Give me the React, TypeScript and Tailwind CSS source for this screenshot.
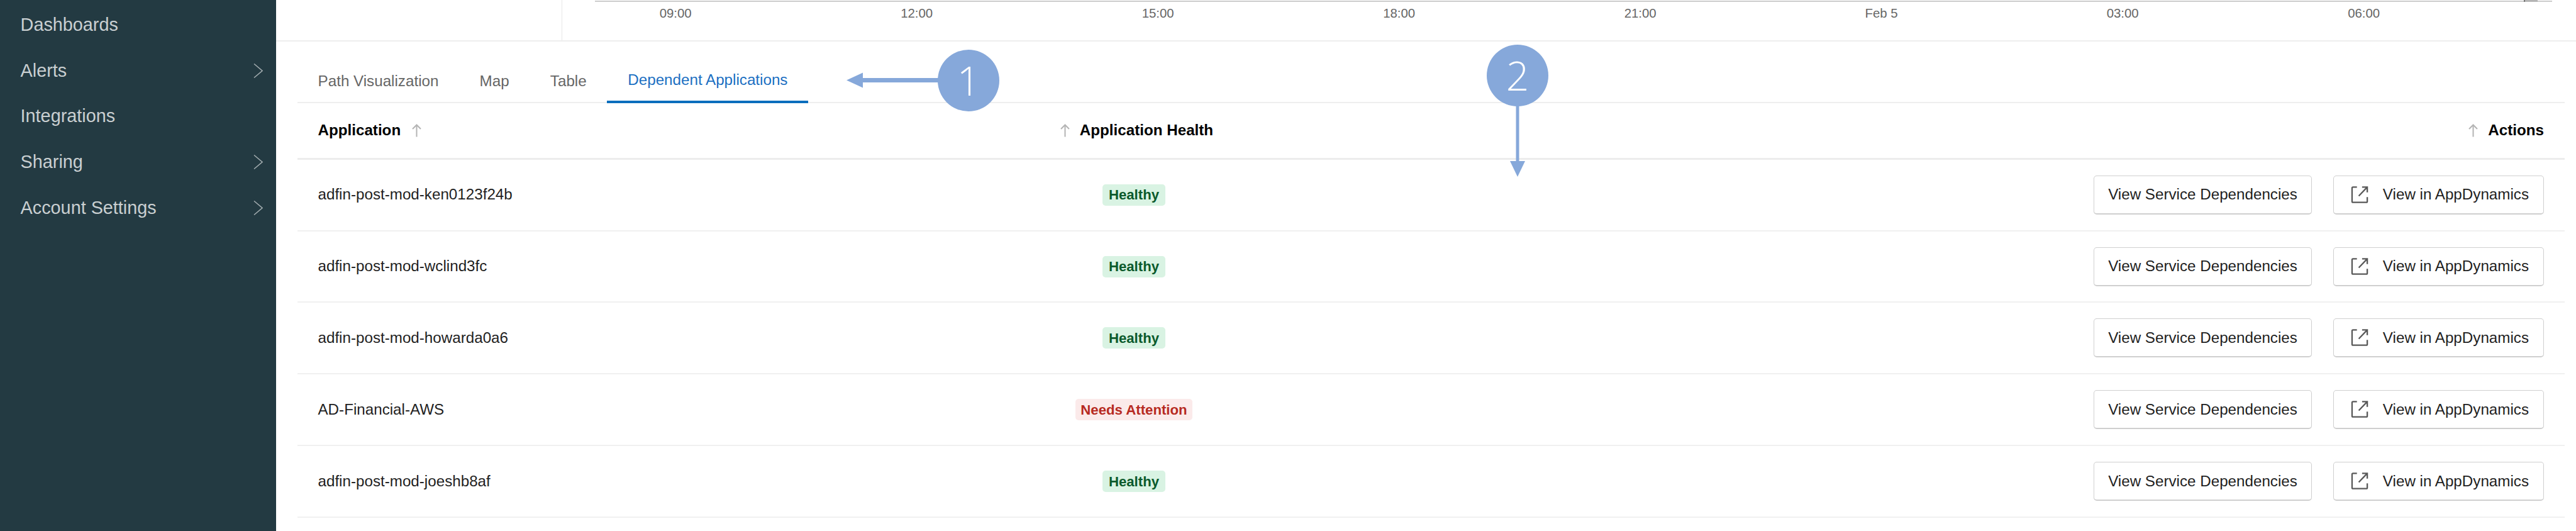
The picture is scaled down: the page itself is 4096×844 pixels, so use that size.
import React from "react";

const ticks = ["09:00", "12:00", "15:00", "18:00", "21:00", "Feb 5", "03:00", "06:00"];
const rows = [
  ["adfin-post-mod-ken0123f24b", "Healthy"],
  ["adfin-post-mod-wclind3fc", "Healthy"],
  ["adfin-post-mod-howarda0a6", "Healthy"],
  ["AD-Financial-AWS", "Needs Attention"],
  ["adfin-post-mod-joeshb8af", "Healthy"],
];
const nav: [string, boolean][] = [
  ["Dashboards", false],
  ["Alerts", true],
  ["Integrations", false],
  ["Sharing", true],
  ["Account Settings", true],
];

function Chevron() {
  return (
    <svg width="15" height="23" viewBox="0 0 15 23" fill="none" stroke="#a3adb0" strokeWidth="1.5" className="shrink-0">
      <path d="M1 .5 L14 11.500 L1 22.500" />
    </svg>
  );
}

function SortArrow() {
  return (
    <svg width="21" height="21" viewBox="0 0 21 21" fill="none" stroke="#b4b4b4" strokeWidth="2" className="shrink-0">
      <path d="M10.500 20.500V1.500M4 8l6.500-6.500L17 8" />
    </svg>
  );
}

function ExternalIcon() {
  return (
    <svg width="29" height="29" viewBox="0 0 30 30" fill="none" stroke="#595959" strokeWidth="2.4" className="shrink-0">
      <path d="M10 2.500H3.500a1.500 1.500 0 0 0-1.500 1.500v22a1.500 1.500 0 0 0 1.500 1.500h22a1.500 1.500 0 0 0 1.500-1.500v-7" />
      <path d="M13 17 27 2.500M18.500 2.500H27V11" />
    </svg>
  );
}

function Badge({ label }: { label: string }) {
  const healthy = label === "Healthy";
  return (
    <span
      className={
        healthy
          ? "h-[34px] px-[10px] rounded-[5px] flex items-center font-bold text-[22.2px] bg-[#d9f3e3] text-[#0b5a2c]"
          : "h-[34px] px-[8px] rounded-[5px] flex items-center font-bold text-[22.2px] bg-[#fbeaea] text-[#b72a22]"
      }
    >
      {label}
    </span>
  );
}

export default function App() {
  return (
    <div className="relative flex w-[4096px] h-[844px] overflow-hidden bg-white font-['Liberation_Sans',Arial,sans-serif]">
      <aside className="w-[439.400px] shrink-0 bg-[#233a42] pt-[3px] pl-[32.600px] pr-[21px] text-[#c9cfd1] text-[28.8px]">
        {nav.map(([label, more]) => (
          <div key={label} className="h-[72.8px] flex items-center justify-between">
            <span>{label}</span>
            {more && <Chevron />}
          </div>
        ))}
      </aside>

      <main className="flex-1 min-w-0 flex flex-col">
        <section className="h-[66px] shrink-0 border-b-2 border-[#eeeeee] flex">
          <div className="w-[455px] shrink-0 border-r border-[#e8e8e8]" />
          <div className="ml-[52px] w-[3112px] shrink-0 flex flex-col">
            <div className="relative h-[2px] mt-[1px] bg-[#cccccc]">
              <div className="absolute right-[23px] -top-[1px] w-[22px] h-[3px] bg-[#b5b5b5] border-l-2 border-[#777777]" />
            </div>
            <div className="flex mt-[4px] -ml-[64px]">
              {ticks.map((t) => (
                <div key={t} className="w-[383.500px] shrink-0 text-center text-[20.4px] leading-[28px] text-[#666666]">
                  {t}
                </div>
              ))}
            </div>
          </div>
        </section>

        <div className="ml-[33.600px] mr-[18px] flex flex-col">
          <div className="h-[98px] shrink-0 pt-[28px] flex border-b-2 border-[#eeeeee] text-[24.2px] text-[#666666]">
            {["Path Visualization", "Map", "Table"].map((t) => (
              <div key={t} className="h-[70px] px-[32.600px] flex items-center">
                {t}
              </div>
            ))}
            <div className="h-[70px] px-[33px] flex items-center text-[#1b6fc2] border-b-[4px] border-[#0a6ebd]">
              Dependent Applications
            </div>
          </div>

          <div className="h-[89.700px] shrink-0 grid grid-cols-[1051px_558px_1fr] items-center border-b-[3px] border-[#ececec] text-[24.2px] font-bold text-black">
            <div className="pl-[32.500px] flex items-center gap-[15px]">
              Application
              <SortArrow />
            </div>
            <div className="flex items-center justify-center gap-[13px] pl-[6px]">
              <SortArrow />
              Application Health
            </div>
            <div className="pr-[33px] flex items-center justify-end gap-[13px]">
              <SortArrow />
              Actions
            </div>
          </div>

          {rows.map(([name, health]) => (
            <div
              key={name}
              className="h-[113.900px] shrink-0 grid grid-cols-[1051px_558px_1fr] items-center border-b-2 border-[#f0f0f0] text-[24.2px] text-[#1f1f1f]"
            >
              <div className="pl-[32.500px]">{name}</div>
              <div className="flex justify-center">
                <Badge label={health} />
              </div>
              <div className="pr-[33px] flex justify-end gap-[34px]">
                <button className="h-[62px] px-[22px] bg-white rounded-[5px] border border-[#cfcfcf] border-b-2 flex items-center">
                  View Service Dependencies
                </button>
                <button className="h-[62px] pl-[27px] pr-[23px] bg-white rounded-[5px] border border-[#cfcfcf] border-b-2 flex items-center gap-[22px]">
                  <ExternalIcon />
                  View in AppDynamics
                </button>
              </div>
            </div>
          ))}
        </div>
      </main>

      {/* callout 1 */}
      <svg className="absolute left-[1341px] top-[108px]" width="160" height="40" viewBox="0 0 160 40" fill="#86a8da">
        <path d="M5 19.500 31 7.500V16H160V23H31V31.500Z" />
      </svg>
      <div className="absolute left-[1491px] top-[79px] w-[98px] h-[98px] rounded-full bg-[#86a8da] flex items-center justify-center text-white font-['Open_Sans',sans-serif] font-light text-[64px] leading-none">
        1
      </div>

      {/* callout 2 */}
      <div className="absolute left-[2364px] top-[71px] w-[98px] h-[98px] rounded-full bg-[#86a8da] flex items-center justify-center text-white font-['Open_Sans',sans-serif] font-light text-[64px] leading-none">
        2
      </div>
      <svg className="absolute left-[2398px] top-[168px]" width="30" height="114" viewBox="0 0 30 114" fill="#86a8da">
        <path d="M12.500 0H17.500V88H27L15 113 3 88H12.500Z" />
      </svg>
    </div>
  );
}
